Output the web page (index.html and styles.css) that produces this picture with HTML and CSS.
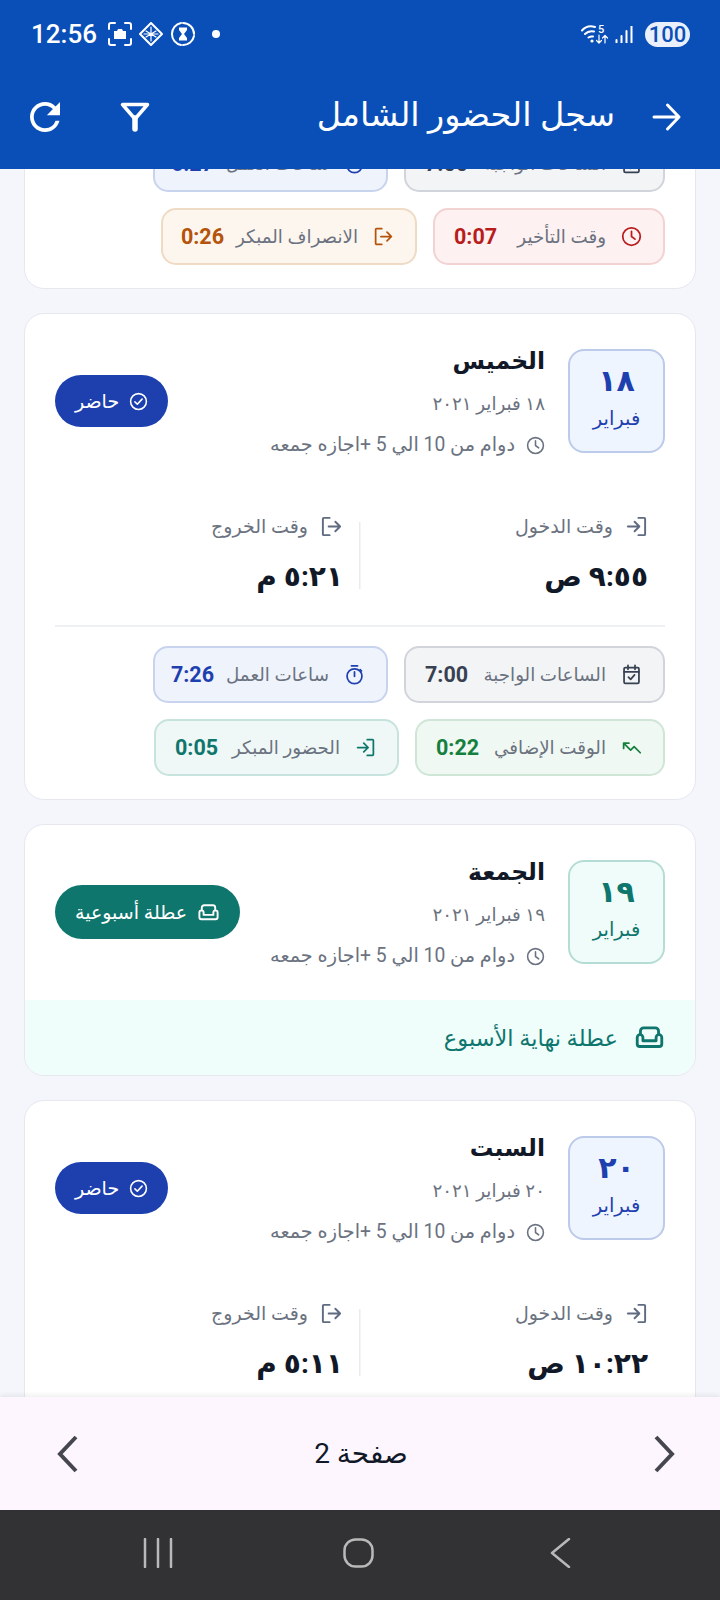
FILE: index.html
```html
<!DOCTYPE html><html dir="rtl" lang="ar"><head><meta charset="utf-8"><meta name="viewport" content="width=device-width">
<title>سجل الحضور الشامل</title>
<link rel="stylesheet" href="styles.css">
</head>
<body>

<svg class="defs" width="0" height="0">
	<symbol id="i-login" viewBox="0 0 24 24"><path d="M14 3h6a1 1 0 0 1 1 1v16a1 1 0 0 1-1 1h-6M10 17l5-5-5-5M15 12H3"/></symbol>
	<symbol id="i-logout" viewBox="0 0 24 24"><path d="M10 3H4a1 1 0 0 0-1 1v16a1 1 0 0 0 1 1h6M16 17l5-5-5-5M21 12H9"/></symbol>
	<symbol id="i-clock" viewBox="0 0 24 24"><circle cx="12" cy="12" r="10"/><path d="M12 6v6l4 3"/></symbol>
	<symbol id="i-check" viewBox="0 0 24 24"><circle cx="12" cy="12" r="10"/><path d="M7.5 12.5l3 3 6-6.5"/></symbol>
	<symbol id="i-timer" viewBox="0 0 24 24"><circle cx="12" cy="14" r="8.5"/><path d="M8.5 2h7M12 14V9M18.5 6.5l1.5 1.5"/></symbol>
	<symbol id="i-cal" viewBox="0 0 24 24"><rect x="3.5" y="4" width="17" height="18" rx="1.5"/><path d="M3.5 9h17M8 1.5V6M16 1.5V6M8.5 15l2.5 2.5 4.5-5"/></symbol>
	<symbol id="i-over" viewBox="0 0 24 24"><path d="M3 7l8 8 4-4 7 7M3 13V7h6"/></symbol>
	<symbol id="i-sofa" viewBox="0 0 24 24"><path d="M5 10V7a2.5 2.5 0 0 1 2.5-2.5h9A2.5 2.5 0 0 1 19 7v3M2.5 12a2.2 2.2 0 0 1 4.4 0v2.5h10.200v-2.500a2.200 2.200 0 0 1 4.400 0V17a2 2 0 0 1-2 2h-15a2 2 0 0 1-2-2z"/></symbol>
</svg>

<div class="phone">

	<div class="appbar">
		<div class="status" dir="ltr">
			<span class="clock">12:56</span>
			<svg class="st st-shot" viewBox="0 0 24 24"><path d="M1 7V3a2 2 0 0 1 2-2h4M17 1h4a2 2 0 0 1 2 2v4M23 17v4a2 2 0 0 1-2 2h-4M7 23H3a2 2 0 0 1-2-2v-4"/><path class="solid" d="M6 9h3l1-2h4l1 2h3v8H6z"/></svg>
			<svg class="st st-diamond" viewBox="0 0 24 24"><path d="M12 1l11 11-11 11L1 12z"/><path class="thin" d="M7 9l10 6M17 9L7 15M12 5v14M5 12h14"/></svg>
			<svg class="st st-glass" viewBox="0 0 24 24"><path d="M12 1a11 11 0 0 1 11 11M23 14a11 11 0 0 1-11 9M10 23A11 11 0 0 1 1 12a11 11 0 0 1 9-11"/><path class="solid" d="M8 5.500h8v2.500l-3 4 3 4v2.500H8V16l3-4-3-4z"/></svg>
			<span class="dot"></span>
			<span class="grow"></span>
			<svg class="st st-wifi" viewBox="0 0 28 20"><path d="M1 6.500C4 3 9 1.500 14 3M4 10c2.500-2.500 6-3.200 9-2.500M7.500 13.500c1.500-1 3-1.300 4.500-1"/><circle class="solid" cx="11" cy="17" r="1.600"/><path class="thin" d="M18 11v8M15.500 16.500L18 19l2.500-2.500M24 19v-7M21.500 14L24 11.500l2.500 2.500"/><text x="17" y="9" class="st-five">5</text></svg>
			<svg class="st st-signal" viewBox="0 0 18 17"><path d="M1.500 14v3M6.500 10v7M11.500 5v12M16.500 0v17"/></svg>
			<span class="batt">100</span>
		</div>
		<div class="bar">
			<svg class="bar-icon" viewBox="0 0 30 30"><path d="M2 15h25M15.500 3L27 15 15.500 27"/></svg>
			<div class="bar-title">سجل الحضور الشامل</div>
			<span class="grow"></span>
			<svg class="bar-icon bar-filter" viewBox="0 0 30 30"><path d="M2.500 2.500h25L15 17z"/><path class="stem" d="M15 16v11"/></svg>
			<svg class="bar-icon bar-refresh" viewBox="4 4 16 16"><path d="M17.650 6.350A7.958 7.958 0 0 0 12 4c-4.420 0-7.990 3.580-7.990 8s3.570 8 7.990 8c3.730 0 6.840-2.550 7.730-6h-2.080A5.990 5.990 0 0 1 12 18c-3.310 0-6-2.690-6-6s2.690-6 6-6c1.660 0 3.140.690 4.220 1.780L13 11h7V4l-2.350 2.350z"/></svg>
		</div>
	</div>

	<div class="list">

		<div class="card card-top">
			<div class="chips">
				<div class="chip grey w-due"><svg class="ic"><use href="#i-cal"/></svg><span class="lbl">الساعات الواجبة</span><b>7:00</b></div>
				<div class="chip blue w-work"><svg class="ic"><use href="#i-timer"/></svg><span class="lbl">ساعات العمل</span><b>6:27</b></div>
			</div>
			<div class="chips">
				<div class="chip red w-late"><svg class="ic"><use href="#i-clock"/></svg><span class="lbl">وقت التأخير</span><b>0:07</b></div>
				<div class="chip orange w-leave"><svg class="ic"><use href="#i-logout"/></svg><span class="lbl">الانصراف المبكر</span><b>0:26</b></div>
			</div>
		</div>

		<div class="card">
			<div class="head">
				<div class="datebox"><div class="num">١٨</div><div class="mon">فبراير</div></div>
				<div class="info">
					<div class="day">الخميس</div>
					<div class="date">١٨ فبراير ٢٠٢١</div>
					<div class="shift"><svg class="ic-s"><use href="#i-clock"/></svg>دوام من 10 الي 5 +اجازه جمعه</div>
				</div>
				<div class="badge"><svg class="ic-b"><use href="#i-check"/></svg>حاضر</div>
			</div>
			<div class="times">
				<div class="tcol">
					<div class="tlabel"><svg class="ic-t"><use href="#i-login"/></svg>وقت الدخول</div>
					<div class="tval">٩:٥٥ ص</div>
				</div>
				<div class="tcol">
					<div class="tlabel"><svg class="ic-t"><use href="#i-logout"/></svg>وقت الخروج</div>
					<div class="tval">٥:٢١ م</div>
				</div>
			</div>
			<div class="rule"></div>
			<div class="chips">
				<div class="chip grey w-due"><svg class="ic"><use href="#i-cal"/></svg><span class="lbl">الساعات الواجبة</span><b>7:00</b></div>
				<div class="chip blue w-work"><svg class="ic"><use href="#i-timer"/></svg><span class="lbl">ساعات العمل</span><b>7:26</b></div>
			</div>
			<div class="chips">
				<div class="chip green w-over"><svg class="ic"><use href="#i-over"/></svg><span class="lbl">الوقت الإضافي</span><b>0:22</b></div>
				<div class="chip teal w-early"><svg class="ic"><use href="#i-login"/></svg><span class="lbl">الحضور المبكر</span><b>0:05</b></div>
			</div>
		</div>

		<div class="card card-off">
			<div class="head">
				<div class="datebox off"><div class="num">١٩</div><div class="mon">فبراير</div></div>
				<div class="info">
					<div class="day">الجمعة</div>
					<div class="date">١٩ فبراير ٢٠٢١</div>
					<div class="shift"><svg class="ic-s"><use href="#i-clock"/></svg>دوام من 10 الي 5 +اجازه جمعه</div>
				</div>
				<div class="badge off"><svg class="ic-b ic-sofa"><use href="#i-sofa"/></svg>عطلة أسبوعية</div>
			</div>
			<div class="banner"><svg class="ic-banner"><use href="#i-sofa"/></svg>عطلة نهاية الأسبوع</div>
		</div>

		<div class="card">
			<div class="head">
				<div class="datebox"><div class="num">٢٠</div><div class="mon">فبراير</div></div>
				<div class="info">
					<div class="day">السبت</div>
					<div class="date">٢٠ فبراير ٢٠٢١</div>
					<div class="shift"><svg class="ic-s"><use href="#i-clock"/></svg>دوام من 10 الي 5 +اجازه جمعه</div>
				</div>
				<div class="badge"><svg class="ic-b"><use href="#i-check"/></svg>حاضر</div>
			</div>
			<div class="times">
				<div class="tcol">
					<div class="tlabel"><svg class="ic-t"><use href="#i-login"/></svg>وقت الدخول</div>
					<div class="tval">١٠:٢٢ ص</div>
				</div>
				<div class="tcol">
					<div class="tlabel"><svg class="ic-t"><use href="#i-logout"/></svg>وقت الخروج</div>
					<div class="tval">٥:١١ م</div>
				</div>
			</div>
			<div class="rule"></div>
		</div>

	</div>

	<div class="pager">
		<svg class="chev" viewBox="0 0 22 38"><path d="M3 2l16 17L3 36"/></svg>
		<div class="pg-text">صفحة 2</div>
		<svg class="chev" viewBox="0 0 22 38"><path d="M19 2L3 19l16 17"/></svg>
	</div>

	<div class="navbar" dir="ltr">
		<svg class="nav-i" viewBox="0 0 40 30"><path d="M5 1v28M18 1v28M31 1v28"/></svg>
		<svg class="nav-i" viewBox="0 0 40 30"><rect x="4.500" y="1.500" width="28" height="27" rx="11"/></svg>
		<svg class="nav-i" viewBox="0 0 40 30"><path d="M29 1L12 15l17 14"/></svg>
	</div>

</div>

</body>
</html>
```
FILE: styles.css
```css
html, body {
	margin: 0;
	padding: 0;
}
body {
	font-family: Roboto, "DejaVu Sans", sans-serif;
	color: #111827;
}
.defs {
	position: absolute;
}
.phone {
	width: 720px;
	height: 1600px;
	display: flex;
	flex-direction: column;
	overflow: hidden;
	background: #f4f6fb;
}
.grow {
	flex: 1;
}

/* top blue area */
.appbar {
	height: 169px;
	flex: none;
	background: #0a4fb7;
	color: #fff;
	position: relative;
	z-index: 2;
}
.status {
	height: 68px;
	display: flex;
	align-items: center;
	padding: 0 30px 0 31px;
}
.clock {
	font-size: 26px;
	font-weight: 500;
	width: 77px;
}
.st {
	fill: none;
	stroke: #fff;
	stroke-width: 2;
	stroke-linecap: round;
	stroke-linejoin: round;
}
.st .solid {
	fill: #fff;
	stroke: none;
}
.st .thin {
	stroke-width: 1.2;
}
.st-shot {
	width: 24px;
	height: 24px;
}
.st-diamond {
	width: 24px;
	height: 24px;
	margin-left: 7px;
}
.st-glass {
	width: 24px;
	height: 24px;
	margin-left: 8px;
}
.dot {
	width: 8px;
	height: 8px;
	border-radius: 50%;
	background: #fff;
	margin-left: 17px;
}
.st-wifi {
	width: 28px;
	height: 20px;
}
.st-five {
	font-size: 11px;
	font-weight: 500;
	fill: #fff;
	stroke: none;
}
.st-signal {
	width: 18px;
	height: 17px;
	margin-left: 6px;
}
.batt {
	width: 45px;
	height: 25px;
	line-height: 25px;
	margin-left: 12px;
	border-radius: 13px;
	background: #e9f0fb;
	color: #0a4fb7;
	font-size: 22px;
	font-weight: 500;
	text-align: center;
}
.bar {
	display: flex;
	align-items: center;
	height: 30px;
	margin-top: 34px;
	padding: 0 38px 0 30px;
}
.bar-icon {
	width: 30px;
	height: 30px;
	flex: none;
	fill: none;
	stroke: #fff;
	stroke-width: 3;
	stroke-linecap: round;
	stroke-linejoin: round;
}
.bar-title {
	font-size: 33.500px;
	line-height: 30px;
	padding-bottom: 5px;
	margin-right: 37px;
	white-space: nowrap;
}
.bar-filter {
	stroke-width: 3.5;
	margin-left: 60px;
}
.bar-filter .stem {
	stroke-width: 5.5;
}
.bar-refresh {
	fill: #fff;
	stroke: none;
}

/* scrolling list */
.list {
	flex: 1;
	min-height: 0;
	overflow: hidden;
	padding: 0 24px;
}
.card {
	background: #fff;
	border: 1.5px solid #e6e8ee;
	border-radius: 20px;
	padding: 0 30px 23px;
	margin-bottom: 24px;
	overflow: hidden;
}
.card-top {
	margin-top: -55px;
	padding-top: 20px;
}
.card-off {
	padding-bottom: 0;
}
.head {
	display: flex;
	align-items: center;
	padding-top: 31px;
}
.datebox {
	width: 97px;
	height: 104px;
	flex: none;
	box-sizing: border-box;
	background: #eff5fe;
	border: 2px solid #bccbea;
	border-radius: 16px;
	color: #1e40af;
	text-align: center;
}
.datebox.off {
	background: #effcf9;
	border-color: #b6ddd5;
	color: #0f766e;
}
.num {
	font-size: 30px;
	font-weight: 700;
	line-height: 40px;
	margin-top: 10px;
}
.mon {
	font-size: 19.500px;
	line-height: 30px;
	margin-top: 3px;
}
.info {
	margin-right: 23px;
	flex: 1;
	min-width: 0;
}
.day {
	font-size: 23.500px;
	font-weight: 700;
	line-height: 32px;
}
.date {
	font-size: 18.300px;
	color: #6b7280;
	line-height: 24px;
	margin-top: 15px;
}
.shift {
	font-size: 19.300px;
	color: #6b7280;
	line-height: 24px;
	margin-top: 17px;
	display: flex;
	align-items: center;
	white-space: nowrap;
}
.ic-s {
	width: 19px;
	height: 19px;
	flex: none;
	margin-left: 11px;
	fill: none;
	stroke: currentColor;
	stroke-width: 2;
	stroke-linecap: round;
	stroke-linejoin: round;
}
.badge {
	flex: none;
	height: 52px;
	padding: 0 20px;
	display: flex;
	align-items: center;
	gap: 10px;
	border-radius: 26px;
	background: #1e40af;
	color: #fff;
	font-size: 19px;
}
.badge.off {
	height: 54px;
	background: #0f766e;
	border-radius: 27px;
}
.ic-b {
	width: 19px;
	height: 19px;
	fill: none;
	stroke: currentColor;
	stroke-width: 2;
	stroke-linecap: round;
	stroke-linejoin: round;
}
.ic-sofa {
	width: 23px;
	height: 23px;
}

/* in and out */
.times {
	display: grid;
	grid-template-columns: 1fr 1fr;
	margin-top: 58px;
	background: linear-gradient(#e9ebef, #e9ebef) center / 1.5px 67px no-repeat;
}
.tcol {
	padding-right: 17px;
}
.tlabel {
	display: flex;
	align-items: center;
	gap: 12px;
	font-size: 19px;
	color: #6b7280;
	line-height: 20px;
}
.ic-t {
	width: 23px;
	height: 23px;
	color: #5f6b80;
	fill: none;
	stroke: currentColor;
	stroke-width: 2;
	stroke-linecap: round;
	stroke-linejoin: round;
}
.tval {
	font-size: 28px;
	font-weight: 700;
	line-height: 36px;
	margin-top: 21px;
}
.rule {
	height: 2px;
	background: #eff0f3;
	margin-top: 30px;
	margin-bottom: 19px;
}

/* chips */
.chips {
	display: flex;
	gap: 16px;
	margin-bottom: 16px;
}
.chips:last-child {
	margin-bottom: 0;
}
.chip {
	height: 57px;
	box-sizing: border-box;
	border: 2px solid;
	border-radius: 15px;
	padding: 0 21px 0 19px;
	display: flex;
	align-items: center;
	font-size: 18.300px;
	color: #6b7280;
	white-space: nowrap;
}
.chip b {
	font-size: 21.500px;
	font-weight: 700;
	margin-right: auto;
}
.lbl {
	margin: 0 15px 0 12px;
}
.ic {
	width: 21px;
	height: 21px;
	flex: none;
	fill: none;
	stroke: currentColor;
	stroke-width: 2;
	stroke-linecap: round;
	stroke-linejoin: round;
}
.w-due {
	width: 261px;
}
.w-work {
	width: 235px;
}
.w-late {
	width: 232px;
}
.w-leave {
	width: 256px;
}
.w-over {
	width: 250px;
}
.w-early {
	width: 245px;
}
.grey {
	background: #f3f4f6;
	border-color: #d1d5db;
}
.grey b, .grey .ic {
	color: #374151;
}
.blue {
	background: #eff3fc;
	border-color: #c8d3ee;
}
.blue b, .blue .ic {
	color: #1e40af;
}
.red {
	background: #fdf1f1;
	border-color: #f3d2d2;
}
.red b, .red .ic {
	color: #b91c1c;
}
.orange {
	background: #fdf6ef;
	border-color: #efdbc4;
}
.orange b, .orange .ic {
	color: #b45309;
}
.green {
	background: #f0f8f3;
	border-color: #cfe6d7;
}
.green b, .green .ic {
	color: #15803d;
}
.teal {
	background: #eff8f6;
	border-color: #c7e3dd;
}
.teal b, .teal .ic {
	color: #0f766e;
}

.banner {
	margin: 32px -30px 0;
	height: 75px;
	padding: 0 30px;
	display: flex;
	align-items: center;
	gap: 16px;
	background: #effdfb;
	color: #0f766e;
	font-size: 22.500px;
}
.ic-banner {
	width: 31px;
	height: 31px;
	flex: none;
	fill: none;
	stroke: currentColor;
	stroke-width: 2.2;
	stroke-linejoin: round;
}

/* bottom */
.pager {
	height: 113px;
	flex: none;
	background: #fdf6ff;
	display: flex;
	align-items: center;
	justify-content: space-between;
	padding: 0 45px 0 57px;
	box-shadow: 0 -2px 5px rgba(0, 0, 0, 0.07);
	position: relative;
}
.chev {
	width: 22px;
	height: 38px;
	fill: none;
	stroke: #45464e;
	stroke-width: 4;
}
.pg-text {
	font-size: 28px;
	margin-right: 10px;
}
.navbar {
	height: 90px;
	flex: none;
	background: #323234;
	display: flex;
	align-items: center;
	justify-content: center;
	gap: 160px;
}
.nav-i {
	width: 40px;
	height: 30px;
	margin-bottom: 4px;
	fill: none;
	stroke: #b9b9b9;
	stroke-width: 2.5;
	stroke-linecap: round;
	stroke-linejoin: round;
}
```
